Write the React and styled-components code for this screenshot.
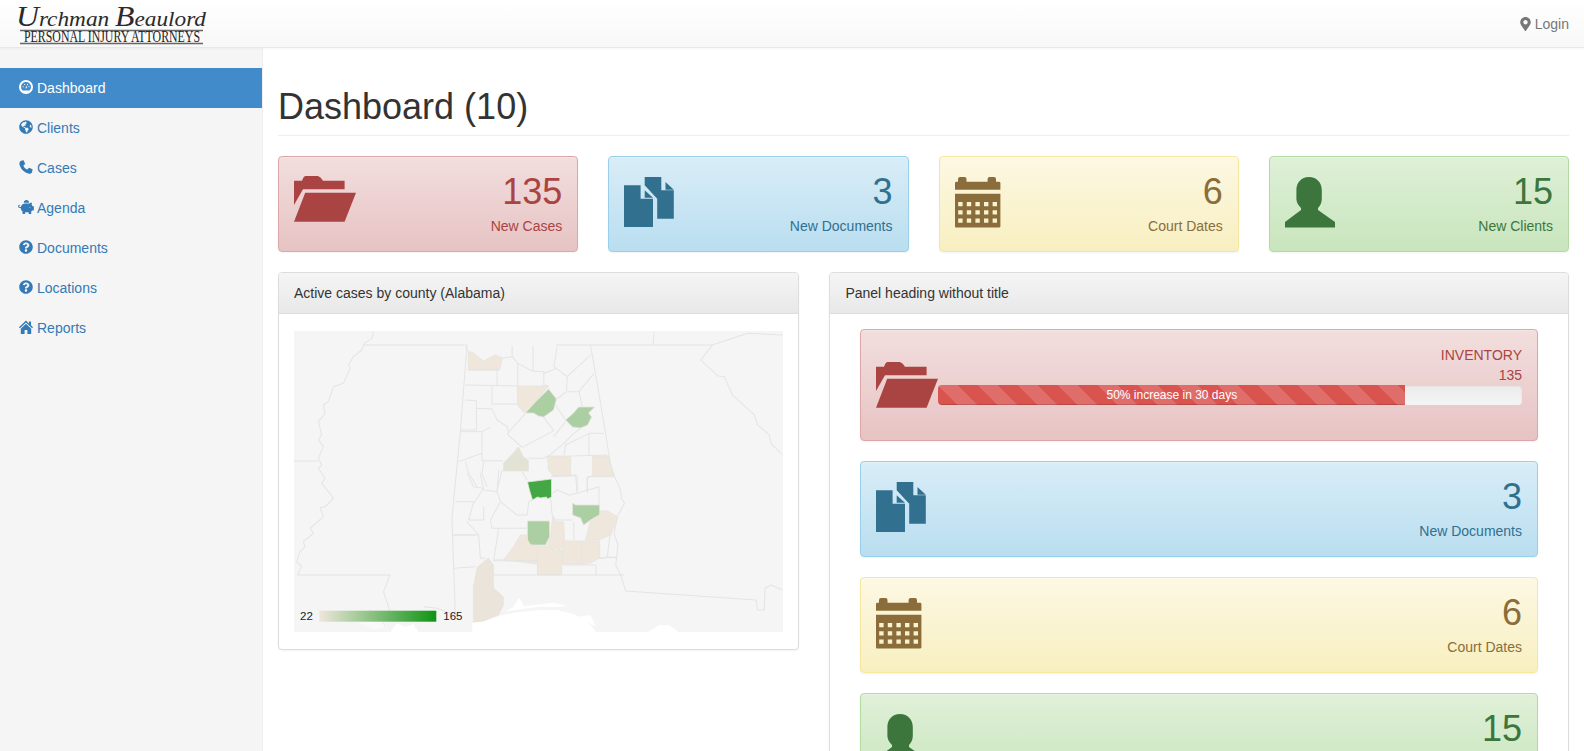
import React from "react";
import styled, { createGlobalStyle, css } from "styled-components";
import { FaGlobeAmericas, FaPiggyBank, FaQuestionCircle, FaMapMarkerAlt } from "react-icons/fa";

const Global = createGlobalStyle`
  html, body { margin: 0; padding: 0; height: 100%; overflow: hidden; background: #fff; }
  body { font-family: "Liberation Sans", Arial, sans-serif; font-size: 14px; line-height: 20px; color: #333; }
  * { box-sizing: border-box; }
`;

const tones = {
  red: { from: "#f2dede", to: "#e7c3c3", border: "#dca7a7", text: "#a94442" },
  blue: { from: "#d9edf7", to: "#b9def0", border: "#9acfea", text: "#31708f" },
  yellow: { from: "#fcf8e3", to: "#f8efc0", border: "#f5e79e", text: "#8a6d3b" },
  green: { from: "#dff0d8", to: "#c8e5bc", border: "#b2dba1", text: "#3c763d" },
};

const Page = styled.div`
  display: flex;
  flex-direction: column;
  height: 100vh;
  overflow: hidden;
`;
const Navbar = styled.header`
  flex: none;
  height: 48px;
  display: flex;
  align-items: center;
  justify-content: space-between;
  padding: 0 15px 0 16px;
  background: linear-gradient(to bottom, #fff 0%, #f8f8f8 100%);
  border-bottom: 1px solid #e7e7e7;
  box-shadow: 0 1px 2px rgba(0, 0, 0, 0.04);
  position: relative;
  z-index: 1;
`;
const LogoSvg = styled.svg`
  display: block;
  width: 192px;
  height: 46px;
  overflow: visible;
`;
const LoginLink = styled.a`
  display: flex;
  align-items: center;
  gap: 4px;
  color: #777;
  svg { width: 11px; height: 14px; }
`;
const Body = styled.div`
  flex: 1;
  min-height: 0;
  display: flex;
`;
const Sidebar = styled.nav`
  flex: none;
  width: 263px;
  padding-top: 20px;
  background: #f5f5f5;
  border-right: 1px solid #eee;
`;
const NavItem = styled.a`
  display: flex;
  align-items: center;
  height: 40px;
  padding-left: 19px;
  color: ${(p) => (p.$active ? "#fff" : "#337ab7")};
  background: ${(p) => (p.$active ? "#428bca" : "transparent")};
`;
const NavIcon = styled.span`
  width: 18px;
  flex: none;
  display: flex;
  align-items: center;
  svg { display: block; width: ${(p) => p.$w || 14}px; height: 14px; margin-left: ${(p) => p.$ml || 0}px; margin-top: -2px; }
`;
const Main = styled.main`
  flex: 1;
  min-width: 0;
  padding: 0 15px;
`;
const PageHeader = styled.div`
  margin: 39px 0 20px;
  padding-bottom: 8px;
  border-bottom: 1px solid #eee;
`;
const Title = styled.h1`
  margin: 0;
  font-size: 36px;
  font-weight: 500;
  line-height: 40px;
  color: #333;
`;
const StatRow = styled.div`
  display: grid;
  grid-template-columns: repeat(4, 1fr);
  gap: 30px;
  margin-bottom: 20px;
`;
const Alert = styled.div`
  display: flex;
  align-items: flex-start;
  padding: 15px;
  margin-bottom: ${(p) => p.$mb || 0}px;
  border: 1px solid ${(p) => tones[p.$tone].border};
  border-radius: 4px;
  color: ${(p) => tones[p.$tone].text};
  background: linear-gradient(to bottom, ${(p) => tones[p.$tone].from} 0%, ${(p) => tones[p.$tone].to} 100%);
  box-shadow: inset 0 1px 0 rgba(255, 255, 255, 0.25), 0 1px 2px rgba(0, 0, 0, 0.05);
`;
const IconBox = styled.div`
  flex: none;
  color: ${(p) => tones[p.$tone].text};
  ${(p) => p.$center && css`align-self: center;`}
  margin-top: ${(p) => (p.$center ? 0 : p.$top ?? 5)}px;
  svg { display: block; fill: currentColor; }
`;
const AlertText = styled.div`
  flex: 1;
  min-width: 0;
  text-align: right;
`;
const Count = styled.div`
  font-size: 36px;
  line-height: 40px;
  height: 44px;
`;
const Label = styled.div`
  line-height: 20px;
`;
const Columns = styled.div`
  display: grid;
  grid-template-columns: calc((100% + 30px) * 5 / 12 - 29px) 1fr;
  gap: 30px;
  align-items: start;
`;
const Panel = styled.section`
  background: #fff;
  border: 1px solid #ddd;
  border-radius: 4px;
  box-shadow: 0 1px 2px rgba(0, 0, 0, 0.05);
`;
const PanelHeading = styled.div`
  height: 41px;
  padding: 10px 15px;
  color: #333;
  background: linear-gradient(to bottom, #f5f5f5 0%, #e8e8e8 100%);
  border-bottom: 1px solid #ddd;
  border-radius: 3px 3px 0 0;
`;
const MapBody = styled.div`
  padding: 17px 15px;
`;
const MapSvg = styled.svg`
  display: block;
  width: 100%;
  height: 301px;
`;
const ListBody = styled.div`
  padding: 15px 30px;
`;
const ProgressTrack = styled.div`
  height: 20px;
  margin-bottom: 20px;
  border-radius: 4px;
  overflow: hidden;
  background: linear-gradient(to bottom, #ebebeb 0%, #f5f5f5 100%);
  box-shadow: inset 0 1px 2px rgba(0, 0, 0, 0.1);
`;
const ProgressFill = styled.div`
  height: 100%;
  color: #fff;
  font-size: 12px;
  line-height: 20px;
  text-align: center;
  background-color: #d9534f;
  background-image: linear-gradient(45deg, rgba(255,255,255,.15) 25%, transparent 25%, transparent 50%, rgba(255,255,255,.15) 50%, rgba(255,255,255,.15) 75%, transparent 75%, transparent);
  background-size: 40px 40px;
  box-shadow: inset 0 -1px 0 rgba(0, 0, 0, 0.15);
`;
const ProgressColumn = styled.div`
  flex: 1;
  min-width: 0;
`;
const RightLine = styled.div`
  text-align: right;
`;

const Logo = () => (
  <LogoSvg viewBox="0 0 192 46">
    <text x="0" y="25" fontFamily="'Liberation Serif', serif" fontStyle="italic" fontSize="22" fill="#2a2a2a" textLength="190" lengthAdjust="spacingAndGlyphs">
      <tspan fontSize="30">U</tspan>rchman <tspan fontSize="30">B</tspan>eaulord
    </text>
    <path d="M4 29.5H187M4 42.5H187" stroke="#666" strokeWidth="1.4" />
    <text x="8" y="41" fontFamily="'Liberation Serif', serif" fontSize="16.5" fill="#222" textLength="176" lengthAdjust="spacingAndGlyphs">PERSONAL INJURY ATTORNEYS</text>
  </LogoSvg>
);

const DashIcon = () => (
  <svg viewBox="0 0 14 14" fill="currentColor">
    <path fillRule="evenodd" d="M7 0a7 7 0 1 0 0 14A7 7 0 0 0 7 0zm0 2a5 5 0 0 1 5 5c0 1.4-.6 2.6-1.5 3.5h-7A5 5 0 0 1 2 7a5 5 0 0 1 5-5z" />
    <path d="M3.6 6.2h1v1h-1zM5.2 4h1v1h-1zM8 4h1v1H8zM9.5 6.2h1v1h-1zM6.4 8 8 5.6l.4.2-1 2.6a.8.8 0 0 1-1-.4z" />
  </svg>
);
const PhoneIcon = () => (
  <svg viewBox="0 0 14 14" fill="currentColor">
    <path d="M2 .8 4.6.3 6.2 4 4.4 5.4c.6 2 2 3.5 4 4.1L10 7.7l3.6 1.6-.5 2.7c-.5 1.5-2 2.1-3.6 1.6C5 12.6 1.5 9 .5 4.6.2 3 .7 1.4 2 .8z" />
  </svg>
);
const HomeIcon = () => (
  <svg viewBox="0 0 14 14" fill="currentColor">
    <path d="M7 .5 10 3.4V1.6h2V5.3L14 7.3 13 8.3 7 2.6 1 8.3 0 7.3Z" />
    <path d="M7 3.8 12.2 8.7V14H8.4V10H5.6V14H1.8V8.7Z" />
  </svg>
);

const FolderIcon = () => (
  <svg width="62" height="46" viewBox="0 0 62 46">
    <path d="M0 4.7H8Q9 1 11 0H24Q27 1 29 4.7H50.6V13.3H9L0 29Z" />
    <path d="M11.2 16.7H62L50.6 45.7H0Z" />
  </svg>
);
const DocsIcon = () => (
  <svg width="50" height="50" viewBox="0 0 50 50">
    <path d="M0 8.3H16.6V21.7H29V50H0Z" />
    <path d="M20.7 13.3V20.7H29Z" />
    <path d="M20.7 0H37.3V13.3H49.8V41.7H33.2V21.7L20.7 8.3Z" />
    <path d="M41.5 5V12.7H49.8Z" />
  </svg>
);
const CalendarIcon = () => {
  let holes = "";
  for (let r = 0; r < 3; r++) for (let c = 0; c < 5; c++) {
    holes += `M${3.2 + c * 8.6} ${25 + r * 8.3}h4.4v4.2h-4.4z`;
  }
  return (
    <svg width="46" height="51" viewBox="0 0 46 51">
      <path d="M0 6Q0 4.7 1.5 4.7H3V2Q3 0 5 0H9.5Q11.5 0 11.5 2V4.7H32.6V2Q32.6 0 34.6 0H39Q41 0 41 2V4.7H44Q45.4 4.7 45.4 6V12.7H0Z" />
      <path fillRule="evenodd" d={`M0 16.7H45.4V49.6Q45.4 50.6 44 50.6H1Q0 50.6 0 49.6Z${holes}`} />
    </svg>
  );
};
const PersonIcon = () => (
  <svg width="50" height="51" viewBox="0 0 50 51">
    <path d="M24 0C16 0 11.4 6 11.4 13V22C11.4 26 14 29 16 31V33L0 45V50.6H50V45L33 33V31C35 29 36.8 26 36.8 22V13C36.8 6 32 0 24 0Z" />
  </svg>
);

const land = "#f5f5f5";
const line = "#e4e4e4";
const tan = "#efe7dc";
const sage = "#abcfa3";

const Poly = ({ d, fill }) => <path d={d} fill={fill} stroke="#e6e3dc" strokeWidth="0.8" strokeLinejoin="round" />;

const z6Lines = [
  "M75 50 85 65", "M85 120H178", "M170 120V165", "M186 85 215 80", "M215 47V80L232 100V168",
  "M232 100 275 123 310 125V165L325 168", "M278 47V123", "M350 50 340 110 380 140 378 185",
  "M310 130 350 115", "M380 140 450 75", "M380 185H415L425 230", "M415 185 460 130",
  "M378 185 345 210", "M75 165 232 168", "M155 168V222H232", "M75 210 108 212V300",
  "M108 235 155 237 170 270 200 290 205 310", "M62 300H108", "M150 292 125 305V392H188", "M60 305H125",
  "M200 312 255 250", "M200 312 245 352", "M245 352 340 302", "M340 302 315 270 310 262", "M345 225 375 270",
  "M340 320 375 275", "M55 395 125 370", "M75 395 85 430 110 470", "M130 395 125 430 140 470", "M185 420 170 480",
  "M245 425 260 450", "M265 385H310L320 378", "M325 378 370 340 400 310 420 295", "M370 375 375 345 445 310V375",
  "M390 378 500 375", "M445 310H490", "M340 437H405L410 490", "M455 437 440 445V490", "M450 47 480 220",
];
const z7Lines = [
  "M45 95H100L85 150H130V110", "M80 10 100 50 130 55 100 100", "M120 10 130 60 170 65 175 0",
  "M180 95 170 65", "M180 95 230 135H260L265 95 275 90", "M150 150 180 95", "M150 150 155 175H262",
  "M35 195H115L80 155", "M115 195 120 265H135", "M175 175 160 270H190", "M40 295 105 290",
  "M158 272H290L292 315", "M158 315H550", "M366 285H466V315", "M470 265 530 262",
  "M330 85 335 135 345 150H395", "M335 70 350 60 385 75 410 70 475 50V105", "M410 15V65", "M440 20V60",
  "M440 20H520", "M508 195 500 262 530 262", "M478 265 500 262", "M400 155V210", "M332 20 405 15",
];

const MapChart = () => (
  <MapSvg viewBox="294 331 488.4 301" preserveAspectRatio="none">
    <defs>
      <linearGradient id="legendGrad" x1="0" x2="1" y1="0" y2="0">
        <stop offset="0" stopColor="#efe6dc" />
        <stop offset="1" stopColor="#0f9413" />
      </linearGradient>
    </defs>
    <rect x="294" y="331" width="489" height="301" fill={land} />
    <g transform="translate(440 470) scale(.3333)">
      <path d="M96 458 130 454 175 438 220 428 300 420 350 420 400 432 440 452 470 490V500H96Z" fill="#fff" />
      <path d="M195 424 218 412 236 385 246 398 250 409 300 403 340 398 378 408 345 411 300 410 222 420Z" fill="#fff" />
      <path d="M415 440 450 435 465 470 440 455Z" fill="#fff" />
    </g>
    <g transform="translate(290 325) scale(.3333)" fill="#fff">
      <path d="M300 922 320 895 345 905 370 898 385 922Z" />
      <path d="M200 890 235 855 270 870 290 905 250 915Z" fill="#f9f9f9" />
    </g>
    <g transform="translate(600 325) scale(.3333)" fill="#fff">
      <path d="M140 922 175 900 205 900 235 922Z" />
    </g>
    <g>
      <Poly fill={tan} d="M468 352H472L483 361 495 355 502 358 499 370H468Z" />
      <Poly fill={tan} d="M517 386H548L535 402 527 411 523 412 517 405Z" />
      <Poly fill={sage} d="M548 389 556 399 553 410 543 417 538 416 533 413H525L535 402Z" />
      <Poly fill={sage} d="M573 413 578 407H594L588 413 591 417 587 425 580 428 572 427 565 420Z" />
      <Poly fill="#e3e3d5" d="M518 447 523 457 528 460V471H503V463L512 454Z" />
      <Poly fill={tan} d="M547 456H570V476H553L548 470Z" />
      <Poly fill={tan} d="M592 456H608L613 476H592Z" />
      <Poly fill="#43a843" d="M527 482 551 479V497L547 499 546 497 540 498 537 497 532 500 529 490Z" />
      <Poly fill={sage} d="M572 503 575 505H599V515L590 520 583 525 580 518 572 515Z" />
      <Poly fill={tan} d="M600 511H607L617 517 610 535 598 540H585L590 520 599 515Z" />
      <Poly fill={tan} d="M552 517 555 522H563L564 540 559 550 555 548 552 550 547 545 550 537Z" />
      <Poly fill={sage} d="M527 521H549V537L545 545H530L527 540Z" />
      <Poly fill={tan} d="M520 535H527V540L530 545 537 546V564L503 560 513 547Z" />
      <Poly fill={tan} d="M537 546H547L552 550H561V575H537Z" />
      <Poly fill={tan} d="M562 541H581V564H562Z" />
      <Poly fill={tan} d="M582 541H599V558L590 563 582 564Z" />
      <Poly fill="#eae4da" d="M488 558 493 565V588L503 597V605L498 615 483 621 473 622V587L477 567Z" />
    </g>
    <g fill="none" stroke={line} strokeWidth="3" strokeLinejoin="round" transform="translate(440 330) scale(.3333)">
      {z6Lines.map((d) => <path key={d} d={d} />)}
    </g>
    <g fill="none" stroke={line} strokeWidth="3" strokeLinejoin="round" transform="translate(440 470) scale(.3333)">
      {z7Lines.map((d) => <path key={d} d={d} />)}
    </g>
    <g fill="none" stroke={line} strokeWidth="3" strokeLinejoin="round" transform="translate(290 325) scale(.3333)">
      <path d="M220 60H530L510 320 485 580 495 870" />
      <path d="M250 20 245 40 222 55 215 75 190 95 175 120 180 130 160 175 130 185 115 230 100 240 105 265 85 290 95 330 85 345 100 365 85 400 95 420 85 430 105 460 95 475 115 500 130 520 105 545 90 548 100 575 60 610 70 625 40 650 45 665 30 680 20 710 35 725 22 750H300L280 800 300 860 290 880" />
      <path d="M0 408H85" />
      <path d="M490 630H555" />
      <path d="M400 845 440 850 495 870" />
      <path d="M205 880 240 855 270 875 285 905" strokeWidth="2" />
    </g>
    <g fill="none" stroke={line} strokeWidth="3" strokeLinejoin="round" transform="translate(600 325) scale(.3333)">
      <path d="M-133 60H335L300 105 350 152 370 155 395 210 460 270 470 300 505 330 510 355 545 390" />
      <path d="M160 20 157 60" />
      <path d="M335 60 380 45 440 25 545 30" />
      <path d="M0 235 30 420 42 455 60 495 62 520 72 535 52 570 40 625 52 660 45 720 60 750 75 798 465 825 470 855H490L492 790 510 780 545 795" />
    </g>
    <rect x="319.3" y="610.7" width="116.7" height="11" fill="url(#legendGrad)" />
    <text x="300" y="620" fontFamily="'Liberation Sans', Arial, sans-serif" fontSize="11.5" fill="#222">22</text>
    <text x="443" y="620" fontFamily="'Liberation Sans', Arial, sans-serif" fontSize="11.5" fill="#222">165</text>
  </MapSvg>
);

const navItems = [
  { label: "Dashboard", icon: <DashIcon />, active: true },
  { label: "Clients", icon: <FaGlobeAmericas /> },
  { label: "Cases", icon: <PhoneIcon /> },
  { label: "Agenda", icon: <FaPiggyBank />, w: 16, ml: -1 },
  { label: "Documents", icon: <FaQuestionCircle /> },
  { label: "Locations", icon: <FaQuestionCircle /> },
  { label: "Reports", icon: <HomeIcon /> },
];

const stats = [
  { tone: "red", count: "135", label: "New Cases", Icon: FolderIcon, top: 4 },
  { tone: "blue", count: "3", label: "New Documents", Icon: DocsIcon },
  { tone: "yellow", count: "6", label: "Court Dates", Icon: CalendarIcon },
  { tone: "green", count: "15", label: "New Clients", Icon: PersonIcon },
];

export default function App() {
  return (
    <Page>
      <Global />
      <Navbar>
        <Logo />
        <LoginLink><FaMapMarkerAlt /> Login</LoginLink>
      </Navbar>
      <Body>
        <Sidebar>
          {navItems.map((n) => (
            <NavItem key={n.label} $active={n.active}>
              <NavIcon $w={n.w} $ml={n.ml}>{n.icon}</NavIcon>
              {n.label}
            </NavItem>
          ))}
        </Sidebar>
        <Main>
          <PageHeader><Title>Dashboard (10)</Title></PageHeader>
          <StatRow>
            {stats.map(({ tone, count, label, Icon, top }) => (
              <Alert key={label} $tone={tone}>
                <IconBox $tone={tone} $top={top}><Icon /></IconBox>
                <AlertText><Count>{count}</Count><Label>{label}</Label></AlertText>
              </Alert>
            ))}
          </StatRow>
          <Columns>
            <Panel>
              <PanelHeading>Active cases by county (Alabama)</PanelHeading>
              <MapBody><MapChart /></MapBody>
            </Panel>
            <Panel>
              <PanelHeading>Panel heading without title</PanelHeading>
              <ListBody>
                <Alert $tone="red" $mb={20}>
                  <IconBox $tone="red" $center><FolderIcon /></IconBox>
                  <ProgressColumn>
                    <RightLine>INVENTORY</RightLine>
                    <RightLine>135</RightLine>
                    <ProgressTrack>
                      <ProgressFill style={{ width: "80%" }}>50% increase in 30 days</ProgressFill>
                    </ProgressTrack>
                  </ProgressColumn>
                </Alert>
                {stats.slice(1).map(({ tone, count, label, Icon }) => (
                  <Alert key={label} $tone={tone} $mb={20}>
                    <IconBox $tone={tone}><Icon /></IconBox>
                    <AlertText><Count>{count}</Count><Label>{label}</Label></AlertText>
                  </Alert>
                ))}
              </ListBody>
            </Panel>
          </Columns>
        </Main>
      </Body>
    </Page>
  );
}
